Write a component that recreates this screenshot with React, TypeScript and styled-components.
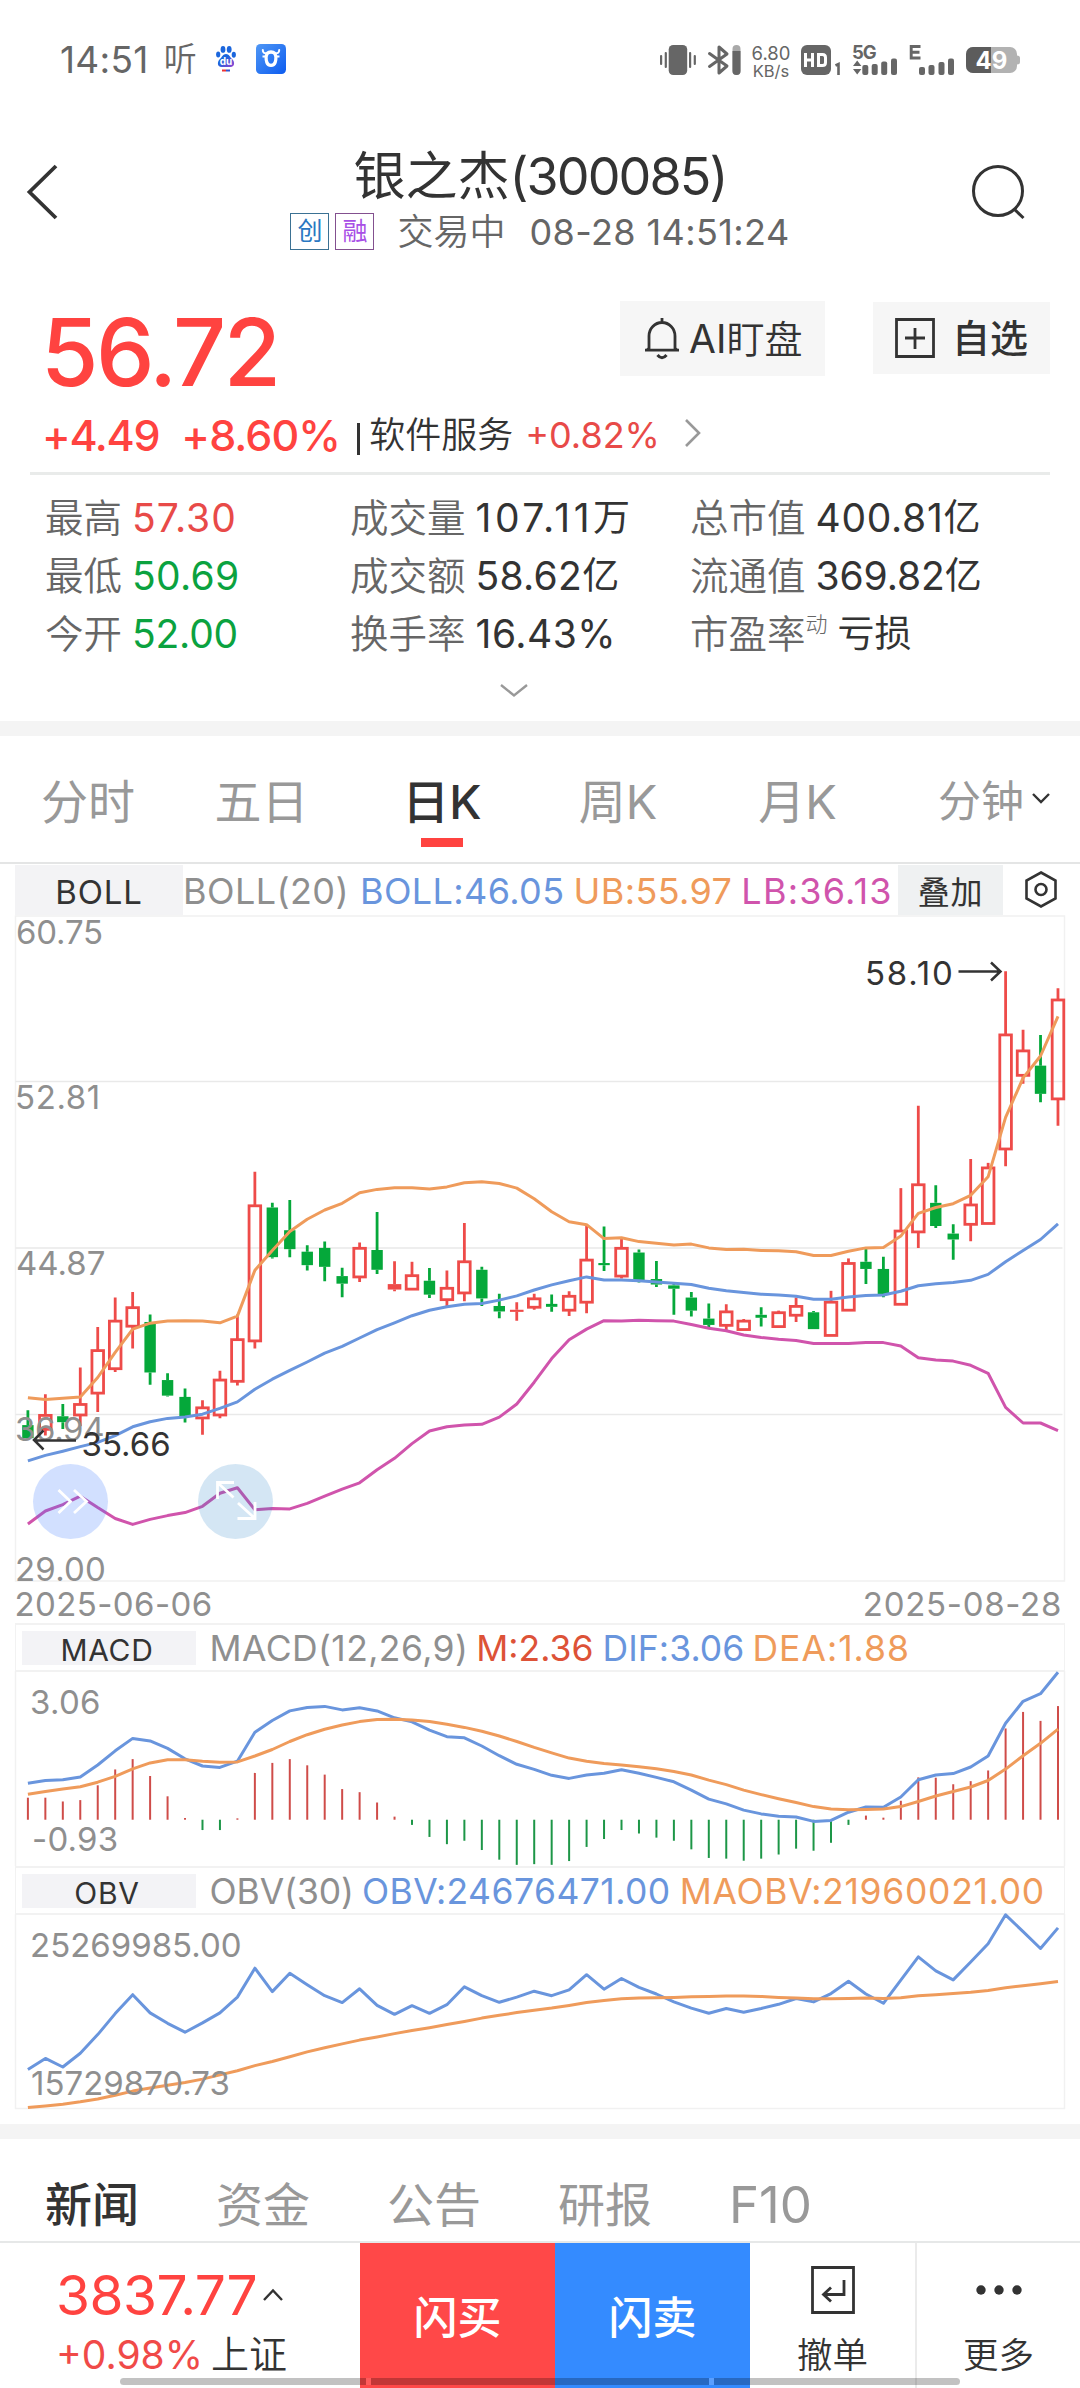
import React from 'react';
import styled, { createGlobalStyle } from 'styled-components';

const RED = '#ff4340';
const GREEN = '#0ba23f';
const INK = '#333333';
const GREY = '#666666';
const MUTED = '#999999';
const BLUE = '#6995dd';
const ORANGE = '#ef9b5b';
const PINK = '#d054ac';
const FONT = 'Inter, "Noto Sans CJK SC", "Noto Sans", sans-serif';

const GlobalStyle = createGlobalStyle`
  * { box-sizing: border-box; }
  body { margin: 0; background: #fff; color: ${INK}; font-family: ${FONT}; }
  svg { display: block; flex: none; overflow: visible; }
`;

const Page = styled.div`
  width: 1080px;
  height: 2388px;
  display: flex;
  flex-direction: column;
  overflow: hidden;
  background: #fff;
`;

interface TextProps {
  $size: number;
  $ls?: number;
  $color?: string;
  $weight?: number;
  $ml?: number;
}

const Text = styled.span<TextProps>`
  font-size: ${p => p.$size}px;
  letter-spacing: ${p => p.$ls ?? 0}px;
  color: ${p => p.$color ?? INK};
  font-weight: ${p => p.$weight ?? 400};
  margin-left: ${p => p.$ml ?? 0}px;
  white-space: pre;
  line-height: 1;
`;

/* ---------- status bar ---------- */

const StatusBar = styled.div`
  height: 118px;
  display: flex;
  align-items: center;
  justify-content: space-between;
  padding: 0 60px;
`;

const StatusGroup = styled.div`
  display: flex;
  align-items: center;
`;

const AppIcons = styled.div`
  display: flex;
  align-items: center;
  gap: 20px;
  margin-left: 19px;
`;

const StatusIcons = styled.div`
  display: grid;
  grid-template-columns: 36px 33px 36px 40px 44px 45px 54px;
  column-gap: 12px;
  align-items: center;
  height: 30px;
`;

const Speed = styled.div`
  display: flex;
  flex-direction: column;
  align-items: center;
  justify-content: space-between;
  height: 32px;
  color: ${GREY};
  line-height: 16px;
`;

const PawIcon = () => (
  <svg width="20" height="28" viewBox="0 0 20 28">
    <defs>
      <linearGradient id="paw" x1="0" y1="0" x2="1" y2="1">
        <stop offset="0.4" stopColor="#1b66dd" />
        <stop offset="1" stopColor="#9b3fd0" />
      </linearGradient>
    </defs>
    <ellipse cx="2.2" cy="9.6" rx="2.1" ry="3" fill="#1b66dd" />
    <ellipse cx="7" cy="4.4" rx="2.4" ry="3.4" fill="#1b66dd" />
    <ellipse cx="13.2" cy="4.4" rx="2.4" ry="3.4" fill="#1b66dd" />
    <ellipse cx="17.8" cy="9.8" rx="2.1" ry="3" fill="#1b66dd" />
    <path d="M10 9c3 0 4 3 6 5 3 2.500 3 8-1.500 8h-9C1 22 1 16.500 4 14c2-2 3-5 6-5z" fill="url(#paw)" />
    <text x="10" y="20" textAnchor="middle" fontSize="10" fontWeight="700" fill="#fff">du</text>
    <path d="M6 25.500h4" stroke="#e33" strokeWidth="2" />
    <path d="M10 25.500h4" stroke="#35c" strokeWidth="2" />
  </svg>
);

const BullIcon = () => (
  <svg width="30" height="30" viewBox="0 0 30 30">
    <defs>
      <linearGradient id="bull" x1="0" y1="0" x2="1" y2="1">
        <stop offset="0" stopColor="#4f97f5" />
        <stop offset="1" stopColor="#0d5cf0" />
      </linearGradient>
    </defs>
    <rect width="30" height="30" rx="4.500" fill="url(#bull)" />
    <path d="M6.800 6c0 2.600 1.500 3.600 4 3.200M23.200 6c0 2.600-1.500 3.600-4 3.200" fill="none" stroke="#fff" strokeWidth="2" strokeLinecap="round" />
    <path d="M11.500 9.200C13 7.500 17 7.500 18.500 9.200c1.600 2 1.600 6.500.6 9.300-1.300 3.800-6.900 3.800-8.200 0-1-2.800-1-7.300.6-9.300z" fill="none" stroke="#fff" strokeWidth="3.400" />
    <path d="M6.500 12.500h3M20.500 12.500h3" stroke="#fff" strokeWidth="2" />
  </svg>
);

const VibrateIcon = () => (
  <svg width="36" height="30" viewBox="0 0 36 30" fill={GREY}>
    <rect x="8.700" width="18.500" height="30" rx="4.500" />
    <rect x="4.700" y="7" width="2.200" height="16" rx="1" />
    <rect y="10" width="2.200" height="10" rx="1" />
    <rect x="29" y="7" width="2.200" height="16" rx="1" />
    <rect x="33.700" y="10" width="2.200" height="10" rx="1" />
  </svg>
);

const BluetoothIcon = () => (
  <svg width="33" height="30" viewBox="0 0 33 30">
    <path d="M1.500 8.500 19 21l-8 7V2l8 7L1.500 21.500" fill="none" stroke={GREY} strokeWidth="3" strokeLinejoin="round" strokeLinecap="round" />
    <rect x="24.500" width="8" height="30" rx="4" fill="#a9a9a9" />
    <path d="M24.500 6h8v20a4 4 0 0 1-8 0z" fill={GREY} />
  </svg>
);

const HdIcon = () => (
  <svg width="40" height="30" viewBox="0 0 40 30">
    <rect width="30" height="30" rx="6" fill={GREY} />
    <path d="M4.500 8v14M4.500 15h7M11.500 8v14M17.500 9.500v11M16 9.500h5.500q3 0 3 3v5q0 3-3 3H16" fill="none" stroke="#fff" strokeWidth="3" />
    <path d="M34.500 20.500 37.500 19v11" fill="none" stroke={GREY} strokeWidth="2.600" />
  </svg>
);

const Signal5G = () => (
  <svg width="44" height="30" viewBox="0 0 44 30" fill={GREY}>
    <text x="-1" y="14" fontSize="18.500" fontWeight="700" letterSpacing="-1">5G</text>
    <path d="M4.200 15.500 8.400 21H0zM4.200 29.500 0 24h8.400z" />
    <rect x="9.300" y="20" width="6" height="10" rx="2" />
    <rect x="18.700" y="19" width="6" height="11" rx="2" />
    <rect x="28.200" y="16.500" width="6" height="13.500" rx="2" />
    <rect x="38" y="13.500" width="6" height="16.500" rx="2" />
  </svg>
);

const SignalE = () => (
  <svg width="45" height="30" viewBox="0 0 45 30" fill={GREY}>
    <path d="M11.500 1.500H2.200v11.500h9.300M2 7.200h8.500" fill="none" stroke={GREY} strokeWidth="2.900" />
    <rect x="10" y="22" width="6" height="8" rx="2" />
    <rect x="19.500" y="20" width="6" height="10" rx="2" />
    <rect x="29.500" y="17" width="6" height="13" rx="2" />
    <rect x="39" y="13.500" width="6" height="16.500" rx="2" />
  </svg>
);

const BatteryIcon = () => (
  <svg width="54" height="26" viewBox="0 0 54 26">
    <rect width="51" height="26" rx="7" fill="#b2b2b2" />
    <path d="M7 0h18v26H7a7 7 0 0 1-7-7V7a7 7 0 0 1 7-7z" fill="#5c5c5c" />
    <path d="M51 8.500q3 0 3 2.500v4q0 2.500-3 2.500z" fill="#b2b2b2" />
    <text x="25.500" y="21.500" textAnchor="middle" fontSize="24" fontWeight="700" fill="#fff">49</text>
  </svg>
);

/* ---------- title bar ---------- */

const TitleBar = styled.header`
  height: 152px;
  display: grid;
  grid-template-columns: 120px 1fr 120px;
  align-items: start;
`;

const TitleSide = styled.div<{ $pad: number }>`
  padding: 47px 0 0 ${p => p.$pad}px;
`;

const TitleCenter = styled.div`
  display: flex;
  flex-direction: column;
  align-items: center;
  padding-top: 28px;
`;

const TitleLine = styled.h1`
  margin: 0;
  height: 61px;
  display: flex;
  align-items: center;
  font-weight: 400;
`;

const SubLine = styled.div`
  height: 49px;
  display: flex;
  align-items: center;
`;

const Badge = styled.span<{ $border: string; $color: string }>`
  width: 39px;
  height: 37px;
  margin-right: 6px;
  border: 1.500px solid ${p => p.$border};
  color: ${p => p.$color};
  font-size: 25px;
  line-height: 34px;
  text-align: center;
`;

/* ---------- quote ---------- */

const Quote = styled.section`
  height: 451px;
  padding: 0 30px;
`;

const PriceRow = styled.div`
  display: flex;
  height: 142px;
`;

const Price = styled.div`
  flex: 1;
  padding: 27px 0 0 11px;
  font-size: 93px;
  line-height: 110px;
  font-weight: 550;
  letter-spacing: -2.500px;
  color: ${RED};
`;

const ActionButton = styled.button<{ $w: number; $h: number; $top: number; $pad: number }>`
  width: ${p => p.$w}px;
  height: ${p => p.$h}px;
  margin: ${p => p.$top}px 0 0;
  padding: 0 0 0 ${p => p.$pad}px;
  display: flex;
  align-items: center;
  border: 0;
  background: #f6f6f6;
  font-family: inherit;
  & + & { margin-left: 48px; }
`;

const ChangeRow = styled.div`
  display: flex;
  align-items: center;
  height: 46px;
  padding-left: 12px;
`;

const Separator = styled.i`
  width: 3px;
  height: 32px;
  margin: 8px 9px 0 17px;
  background: ${INK};
`;

const Divider = styled.hr`
  margin: 14px 0 14px;
  border: 0;
  height: 3px;
  background: #e9ebea;
`;

const Stats = styled.div`
  display: grid;
  grid-template-columns: 305px 340px 1fr;
  grid-auto-rows: 58px;
  padding-left: 15px;
`;

const Stat = styled.div`
  display: flex;
  align-items: center;
  white-space: pre;
`;

const StatLabel = styled.span`
  font-size: 38.500px;
  line-height: 58px;
  font-weight: 350;
  color: ${GREY};
`;

const StatValue = styled.span<{ $color?: string; $ls?: number }>`
  display: flex;
  margin-left: 10px;
  font-size: 39px;
  line-height: 58px;
  letter-spacing: ${p => p.$ls ?? 0.3}px;
  color: ${p => p.$color ?? INK};
`;

const Unit = styled.span`
  font-size: 37px;
  letter-spacing: 0;
`;

const Sup = styled.sup`
  align-self: flex-start;
  margin: 4px 0 0;
  font-size: 22px;
  line-height: 30px;
  font-weight: 300;
  color: ${GREY};
`;

const Expand = styled.div`
  display: flex;
  justify-content: center;
  padding: 21px 52px 0 0;
`;

const Band = styled.div`
  flex: none;
  height: 15px;
  background: #f4f4f4;
`;

/* ---------- period tabs ---------- */

const PeriodTabs = styled.nav`
  height: 128px;
  flex: none;
  display: grid;
  grid-template-columns: 176px 171px 190px 162px 197px 184px;
  border-bottom: 2px solid #e4e5e5;
`;

const PeriodTab = styled.div<{ $active?: boolean; $size?: number }>`
  display: flex;
  align-items: center;
  justify-content: center;
  position: relative;
  height: 124px;
  font-size: ${p => p.$size ?? 47}px;
  font-weight: ${p => (p.$active ? 500 : 370)};
  color: ${p => (p.$active ? INK : MUTED)};
  &::after {
    content: '';
    display: ${p => (p.$active ? 'block' : 'none')};
    position: absolute;
    left: 74px;
    top: 102px;
    width: 42px;
    height: 9px;
    background: ${RED};
  }
  svg { margin: 0 -12px 0 8px; }
`;

/* ---------- chart ---------- */

const IndicatorRow = styled.div`
  flex: none;
  height: 51px;
  display: flex;
  align-items: center;
  padding: 0 15px;
`;

const IndicatorButton = styled.div<{ $w: number; $bg: string; $size: number; $drop: number }>`
  flex: none;
  width: ${p => p.$w}px;
  height: 50px;
  display: flex;
  align-items: center;
  justify-content: center;
  font-size: ${p => p.$size}px;
  letter-spacing: 0.800px;
  padding-top: ${p => p.$drop}px;
  background: ${p => p.$bg};
`;

const Readings = styled.div`
  flex: none;
  width: 715px;
  display: flex;
  align-items: center;
  padding-top: 2px;
`;

const ChartArea = styled.div`
  position: relative;
  flex: none;
  height: 667px;
`;

const RoundButton = styled.button<{ $x: number; $bg: string }>`
  position: absolute;
  left: ${p => p.$x}px;
  top: 549px;
  width: 75px;
  height: 75px;
  padding: 0;
  border: 0;
  border-radius: 50%;
  background: ${p => p.$bg};
`;

const DateRow = styled.div`
  flex: none;
  height: 41px;
  display: flex;
  align-items: center;
  justify-content: space-between;
  padding: 4px 18px 0 14.500px;
`;

const Panel = styled.div`
  flex: none;
  margin: 0 15px;
`;

const PanelHead = styled.div`
  height: 49px;
  margin-bottom: -1px;
  display: flex;
  align-items: center;
  padding: 3px 0 0 7px;
  border: 2px solid #f2f2f2;
  border-width: 2px 1px;
`;

const PanelTag = styled.div`
  flex: none;
  width: 174px;
  height: 34px;
  margin: -3px 0 0 -1px;
  padding: 4px 4px 0 0;
  background: #f3f3f6;
  display: flex;
  justify-content: center;
  align-items: center;
  font-size: 30px;
  letter-spacing: 0.700px;
`;

const ChartLabel = styled.text`
  font-family: ${FONT};
  font-size: 33px;
`;

const X0 = 27.9;
const STEP = 17.459;
const xAt = (i: number) => X0 + i * STEP;

/* colour, high, body top, body bottom, low */
type Candle = ['r' | 'g' | 'f', number, number, number, number];
const candles: Candle[] = [
  ['g', 1070, 1105, 1136, 1140], ['r', 1032, 1082, 1115, 1130], ['g', 1055, 1084, 1098, 1114], ['r', 968, 1056, 1081, 1108],
  ['r', 872, 928, 1029, 1074], ['r', 802, 858, 971, 979], ['r', 789, 826, 870, 923], ['g', 842, 860, 980, 1009],
  ['g', 982, 998, 1035, 1037], ['g', 1018, 1038, 1084, 1099], ['r', 1046, 1064, 1088, 1128], ['r', 976, 998, 1081, 1089],
  ['r', 842, 902, 1001, 1011], ['r', 503, 584, 905, 923], ['g', 577, 588, 706, 709], ['g', 570, 642, 687, 706],
  ['g', 678, 693, 725, 738], ['g', 669, 684, 729, 763], ['g', 731, 751, 769, 801], ['r', 671, 685, 753, 765],
  ['g', 599, 689, 736, 746], ['f', 716, 770, 783, 787], ['r', 717, 750, 782, 782], ['g', 732, 762, 795, 803],
  ['r', 738, 780, 807, 822], ['r', 625, 717, 791, 811], ['g', 729, 736, 804, 822], ['g', 793, 822, 835, 851],
  ['f', 813, 831, 836, 857], ['r', 793, 805, 825, 831], ['g', 795, 817, 824, 836], ['r', 787, 799, 832, 846],
  ['r', 630, 713, 813, 839], ['g', 633, 720, 725, 739], ['r', 662, 685, 751, 757], ['g', 688, 695, 764, 766],
  ['g', 715, 758, 771, 777], ['g', 770, 773, 781, 843], ['g', 789, 802, 833, 847], ['g', 816, 852, 867, 873],
  ['r', 818, 836, 868, 880], ['r', 853, 858, 878, 878], ['g', 825, 843, 850, 871], ['r', 833, 838, 871, 871],
  ['r', 802, 823, 844, 860], ['g', 834, 837, 877, 877], ['r', 786, 813, 892, 892], ['r', 709, 721, 832, 832],
  ['g', 685, 717, 734, 770], ['g', 705, 734, 796, 801], ['r', 542, 644, 818, 818], ['r', 346, 534, 646, 684],
  ['g', 535, 577, 632, 637], ['g', 628, 650, 664, 712], ['r', 473, 582, 628, 668], ['r', 482, 494, 626, 626],
  ['r', 27, 178, 449, 490], ['r', 166, 216, 274, 294], ['g', 178, 251, 318, 338], ['r', 67, 95, 330, 394],
];
const upper = [1040, 1044, 1041, 1038, 992, 932, 877, 863, 858, 857, 858, 862, 846, 737, 690, 645, 616, 594, 578, 553, 545, 541, 541, 544, 539, 529, 527, 531, 542, 567, 598, 622, 629, 662, 660, 669, 673, 677, 675, 684, 688, 687, 690, 691, 693, 702, 702, 692, 684, 683, 656, 602, 588, 579, 559, 515, 374, 280, 228, 134];
const middle = [1190, 1177, 1167, 1156, 1146, 1130, 1109, 1097, 1089, 1086, 1079, 1065, 1050, 1020, 996, 975, 955, 934, 918, 898, 878, 862, 845, 832, 824, 818, 816, 808, 798, 784, 772, 762, 753, 760, 760, 762, 765, 768, 771, 780, 786, 790, 794, 796, 799, 806, 806, 801, 797, 796, 787, 774, 769, 766, 761, 747, 717, 690, 664, 627];
const lower = [1340, 1309, 1294, 1274, 1301, 1327, 1341, 1329, 1320, 1313, 1298, 1267, 1254, 1306, 1303, 1304, 1291, 1274, 1257, 1242, 1211, 1184, 1149, 1119, 1109, 1105, 1103, 1086, 1055, 1003, 947, 902, 877, 857, 858, 856, 857, 858, 866, 875, 881, 891, 897, 901, 904, 911, 911, 911, 909, 909, 917, 945, 950, 953, 963, 982, 1063, 1100, 1100, 1118];
const dif = [532, 524, 522, 514, 479, 438, 402, 409, 431, 461, 482, 486, 468, 384, 350, 322, 312, 309, 319, 313, 322, 342, 354, 378, 397, 400, 424, 452, 477, 492, 509, 518, 508, 503, 493, 503, 515, 528, 552, 578, 592, 610, 621, 628, 630, 643, 640, 616, 601, 602, 572, 522, 508, 504, 485, 453, 358, 294, 272, 210];
const dea = [564, 556, 549, 542, 529, 512, 490, 473, 464, 464, 468, 471, 470, 453, 434, 411, 391, 375, 363, 353, 347, 346, 348, 353, 361, 370, 381, 395, 411, 428, 444, 459, 468, 475, 479, 484, 490, 498, 508, 523, 536, 552, 565, 577, 588, 600, 607, 609, 608, 607, 600, 585, 569, 556, 543, 524, 491, 452, 416, 375];
const macd = [574, 574, 585, 581, 538, 492, 462, 511, 570, 633, 668, 668, 634, 502, 473, 462, 480, 507, 549, 558, 588, 629, 653, 688, 709, 699, 726, 754, 769, 767, 769, 758, 717, 694, 668, 678, 690, 699, 724, 749, 751, 757, 751, 739, 722, 728, 705, 653, 626, 632, 583, 515, 516, 535, 526, 495, 373, 325, 351, 308];
const obv = [1363, 1331, 1356, 1316, 1262, 1201, 1146, 1199, 1229, 1255, 1228, 1199, 1153, 1069, 1137, 1084, 1117, 1149, 1169, 1129, 1177, 1203, 1178, 1200, 1175, 1123, 1149, 1168, 1153, 1136, 1149, 1132, 1088, 1130, 1099, 1125, 1144, 1167, 1185, 1200, 1186, 1197, 1186, 1174, 1157, 1167, 1143, 1107, 1144, 1171, 1104, 1036, 1077, 1103, 1051, 998, 914, 963, 1012, 952];
const maobv = [1474, 1469, 1464, 1457, 1449, 1438, 1426, 1417, 1409, 1401, 1391, 1379, 1367, 1352, 1340, 1326, 1312, 1300, 1289, 1278, 1269, 1259, 1250, 1242, 1233, 1224, 1214, 1206, 1198, 1191, 1185, 1177, 1169, 1163, 1158, 1156, 1155, 1154, 1152, 1151, 1150, 1150, 1151, 1154, 1156, 1158, 1158, 1157, 1156, 1157, 1155, 1149, 1146, 1143, 1139, 1134, 1126, 1120, 1114, 1108];

const Line = ({ data, y, color }: { data: number[]; y: (v: number) => number; color: string }) => (
  <polyline
    points={data.map((v, i) => `${xAt(i).toFixed(1)},${y(v).toFixed(1)}`).join(' ')}
    fill="none"
    stroke={color}
    strokeWidth="3"
    strokeLinejoin="round"
  />
);

const priceY = (v: number) => 45 + v * 0.4209;

const PriceChart = () => (
  <svg width="1080" height="667" viewBox="0 0 1080 667">
    <path d="M15.500 1h1049v665H15.500z" fill="none" stroke="#f1f1f1" strokeWidth="1.500" />
    <path d="M15.500 166.500h1047M15.500 333h1047M15.500 499.500h1047" stroke="#e9e9e9" strokeWidth="1.500" />
    {candles.map(([kind, high, top, bottom, low], i) => {
      const x = xAt(i);
      const [h, t, b, l] = [high, top, bottom, low].map(priceY);
      const color = kind === 'g' ? '#05a83a' : '#ee4b49';
      return (
        <g key={i} fill={color} stroke={color}>
          <path d={`M${x} ${h}V${t}M${x} ${b}V${l}`} strokeWidth="2.800" />
          {kind === 'r'
            ? <rect x={x - 5.8} y={t} width="11.600" height={b - t} strokeWidth="2.800" fill="none" />
            : <rect x={x - (kind === 'f' ? 6.8 : 5.7)} y={t} width={kind === 'f' ? 13.6 : 11.4} height={b - t} stroke="none" />}
        </g>
      );
    })}
    <Line data={upper} y={priceY} color={ORANGE} />
    <Line data={middle} y={priceY} color={BLUE} />
    <Line data={lower} y={priceY} color={PINK} />
    <g fill="#8f8f8f">
      <ChartLabel x="16" y="28.500" letterSpacing="-0.200">60.75</ChartLabel>
      <ChartLabel x="15" y="194" letterSpacing="0.600">52.81</ChartLabel>
      <ChartLabel x="16" y="360">44.87</ChartLabel>
      <ChartLabel x="15" y="526" letterSpacing="-0.300">36.94</ChartLabel>
      <ChartLabel x="15" y="666" letterSpacing="0.200">29.00</ChartLabel>
    </g>
    <g fill={INK}>
      <ChartLabel x="81.500" y="541">35.66</ChartLabel>
      <ChartLabel x="865" y="70" letterSpacing="1.800">58.10</ChartLabel>
    </g>
    <g fill="none" stroke={INK} strokeWidth="2.500">
      <path d="M76 525.500H34M43.500 515.500 34 525l9.500 9.500" />
      <path d="M958.500 56.500h42M991 47.500l9.500 9-9.500 9" />
    </g>
  </svg>
);

const macdY = (v: number) => v * 0.3444 - 71;
const obvY = (v: number) => v * 0.3444 - 314;

const MacdChart = () => (
  <svg width="1050" height="195" viewBox="15 0 1050 195">
    <path d="M15.500 0v195M1064.500 0v195" stroke="#f1f1f1" strokeWidth="1.500" />
    {macd.map((v, i) => (
      <path key={i} d={`M${xAt(i)} ${macdY(638)}V${macdY(v)}`} stroke={v < 638 ? '#cf4c49' : '#1d9647'} strokeWidth="2" />
    ))}
    <Line data={dif} y={macdY} color={BLUE} />
    <Line data={dea} y={macdY} color={ORANGE} />
    <g fill="#8f8f8f">
      <ChartLabel x="30" y="43" letterSpacing="0.300">3.06</ChartLabel>
      <ChartLabel x="32" y="180" letterSpacing="0.200">-0.93</ChartLabel>
    </g>
  </svg>
);

const ObvChart = () => (
  <svg width="1050" height="195" viewBox="15 0 1050 195">
    <path d="M15.500 0v194.500h1049V0" fill="none" stroke="#f1f1f1" strokeWidth="1.500" />
    <Line data={obv} y={obvY} color={BLUE} />
    <Line data={maobv} y={obvY} color={ORANGE} />
    <g fill="#8f8f8f">
      <ChartLabel x="30" y="43">25269985.00</ChartLabel>
      <ChartLabel x="31" y="181">15729870.73</ChartLabel>
    </g>
  </svg>
);

/* ---------- news tabs & bottom bar ---------- */

const NewsTabs = styled.nav`
  flex: none;
  height: 104px;
  display: grid;
  grid-template-columns: 171px 171px 171px 171px 1fr;
  padding: 25px 0 0 45px;
  border-bottom: 2px solid #e6e8e8;
`;

const NewsTab = styled.span<{ $active?: boolean; $size?: number }>`
  font-size: ${p => p.$size ?? 47}px;
  line-height: 82px;
  font-weight: ${p => (p.$active ? 500 : 370)};
  color: ${p => (p.$active ? INK : MUTED)};
`;

const ChartGap = styled.div`
  flex: none;
  height: 15px;
`;

const BottomBar = styled.footer`
  position: relative;
  flex: 1;
  display: grid;
  grid-template-columns: 360px 195px 195px 165px 165px;
`;

const IndexCell = styled.div`
  padding: 20px 0 0 56px;
`;

const IndexLine = styled.div<{ $h: number }>`
  height: ${p => p.$h}px;
  display: flex;
  align-items: center;
`;

const TradeButton = styled.button<{ $bg: string }>`
  border: 0;
  padding: 0 0 1px;
  background: ${p => p.$bg};
  color: #fff;
  font-family: inherit;
  font-size: 44px;
  font-weight: 500;
`;

const ToolCell = styled.div`
  display: grid;
  grid-template-rows: 48px 1fr;
  justify-items: center;
  align-items: center;
  padding: 23px 0 0;
  font-size: 35.500px;
  & + & { border-left: 2px solid #ebebeb; }
`;

const ToolLabel = styled.span`
  align-self: start;
  margin-top: 17px;
  line-height: 50px;
  font-weight: 350;
`;

const HomeIndicator = styled.div`
  position: absolute;
  left: 120px;
  bottom: 3px;
  width: 840px;
  height: 7px;
  border-radius: 4px;
  background: rgba(0, 0, 0, 0.24);
  display: flex;
  gap: 338px;
  padding-left: 246px;
`;

const Notch = styled.i<{ $c: string }>`
  width: 5px;
  height: 7px;
  background: ${p => p.$c};
`;

export default function App() {
  return (
    <Page>
      <GlobalStyle />
      <StatusBar>
        <StatusGroup>
          <Text $size={37} $ls={0.3} $color={GREY}>14:51</Text>
          <Text $size={33} $color={GREY} $ml={15} $weight={350}>听</Text>
          <AppIcons>
            <PawIcon />
            <BullIcon />
          </AppIcons>
        </StatusGroup>
        <StatusIcons>
          <VibrateIcon />
          <BluetoothIcon />
          <Speed>
            <Text $size={18.5} $color={GREY}>6.80</Text>
            <Text $size={16.5} $color={GREY}>KB/s</Text>
          </Speed>
          <HdIcon />
          <Signal5G />
          <SignalE />
          <BatteryIcon />
        </StatusIcons>
      </StatusBar>

      <TitleBar>
        <TitleSide $pad={27}>
          <svg width="31" height="54" viewBox="0 0 31 54">
            <path d="M29 1 2.500 27 29 53" fill="none" stroke={INK} strokeWidth="3.800" />
          </svg>
        </TitleSide>
        <TitleCenter>
          <TitleLine>
            <Text $size={52} $weight={370}>银之杰</Text>
            <Text $size={52} $ls={-1.9} $weight={370}>(300085)</Text>
          </TitleLine>
          <SubLine>
            <Badge $border="#3b7193" $color="#2a78c2">创</Badge>
            <Badge $border="#83508f" $color="#a84fe6">融</Badge>
            <Text $size={36} $color={GREY} $ml={17} $weight={350}>交易中</Text>
            <Text $size={36} $color={GREY} $ml={24} $ls={0.4}>08-28 14:51:24</Text>
          </SubLine>
        </TitleCenter>
        <TitleSide $pad={11}>
          <svg width="54" height="56" viewBox="0 0 54 56">
            <circle cx="27" cy="26" r="24.500" fill="none" stroke={INK} strokeWidth="3" />
            <path d="m43 44 9.500 9" stroke={INK} strokeWidth="3" />
          </svg>
        </TitleSide>
      </TitleBar>

      <Quote>
        <PriceRow>
          <Price>56.72</Price>
          <ActionButton $w={205} $h={75} $top={31} $pad={25}>
            <svg width="34" height="42" viewBox="0 0 34 42">
              <path d="M4 31V18a13 13.500 0 0 1 26 0v13M0 32.200h34M17 0v4" fill="none" stroke={INK} strokeWidth="2.800" />
              <path d="M4 30 1.500 32M30 30l2.500 2" stroke={INK} strokeWidth="2" />
              <path d="M12.500 37q4.500 5.500 9 0" fill="none" stroke={INK} strokeWidth="3" />
            </svg>
            <Text $size={39} $ml={10}>AI</Text>
            <Text $size={38} $ml={0} $weight={350}>盯盘</Text>
          </ActionButton>
          <ActionButton $w={177} $h={72} $top={32} $pad={22}>
            <svg width="40" height="40" viewBox="0 0 40 40">
              <path d="M1.500 1.500h37v37h-37zM10 20h20M20 10v21" fill="none" stroke={INK} strokeWidth="2.800" />
            </svg>
            <Text $size={38} $ml={17} $weight={500}>自选</Text>
          </ActionButton>
        </PriceRow>
        <ChangeRow>
          <Text $size={43} $ls={-1.3} $color={RED} $weight={500}>+4.49</Text>
          <Text $size={43} $ls={-0.9} $color={RED} $weight={500} $ml={22}>+8.60%</Text>
          <Separator />
          <Text $size={36} $weight={350}>软件服务</Text>
          <Text $size={36} $color="#e84a48" $ml={12}>+0.82%</Text>
          <svg width="60" height="28" viewBox="-25 2 60 28">
            <path d="m1 1 13 13L1 27" fill="none" stroke={MUTED} strokeWidth="2.600" />
          </svg>
        </ChangeRow>
        <Divider />
        <Stats>
          <Stat><StatLabel>最高</StatLabel><StatValue $color="#e84a48" $ls={1}>57.30</StatValue></Stat>
          <Stat><StatLabel>成交量</StatLabel><StatValue $ls={3.5}>107.11<Unit>万</Unit></StatValue></Stat>
          <Stat><StatLabel>总市值</StatLabel><StatValue $ls={0.7}>400.81<Unit>亿</Unit></StatValue></Stat>
          <Stat><StatLabel>最低</StatLabel><StatValue $color={GREEN}>50.69</StatValue></Stat>
          <Stat><StatLabel>成交额</StatLabel><StatValue $ls={0.3}>58.62<Unit>亿</Unit></StatValue></Stat>
          <Stat><StatLabel>流通值</StatLabel><StatValue $ls={-0.1}>369.82<Unit>亿</Unit></StatValue></Stat>
          <Stat><StatLabel>今开</StatLabel><StatValue $color={GREEN} $ls={-0.2}>52.00</StatValue></Stat>
          <Stat><StatLabel>换手率</StatLabel><StatValue $ls={0.5}>16.43%</StatValue></Stat>
          <Stat><StatLabel>市盈率</StatLabel><Sup>动</Sup><StatValue><Unit>亏损</Unit></StatValue></Stat>
        </Stats>
        <Expand>
          <svg width="28" height="13" viewBox="0 0 28 13">
            <path d="m1 1 13 10.500L27 1" fill="none" stroke={MUTED} strokeWidth="2.400" />
          </svg>
        </Expand>
      </Quote>

      <Band />

      <PeriodTabs>
        <PeriodTab>分时</PeriodTab>
        <PeriodTab>五日</PeriodTab>
        <PeriodTab $active>日K</PeriodTab>
        <PeriodTab>周K</PeriodTab>
        <PeriodTab>月K</PeriodTab>
        <PeriodTab $size={43}>
          分钟
          <svg width="18" height="11" viewBox="0 0 18 11">
            <path d="m1 1 8 8 8-8" fill="none" stroke={INK} strokeWidth="2.400" />
          </svg>
        </PeriodTab>
      </PeriodTabs>

      <IndicatorRow>
        <IndicatorButton $w={168} $bg="#f3f3f5" $size={33} $drop={4}>BOLL</IndicatorButton>
        <Readings>
          <Text $size={36} $ls={0.4} $color="#8f8f8f">BOLL(20)</Text>
          <Text $size={36} $ls={0.4} $color={BLUE} $ml={11}>BOLL:46.05</Text>
          <Text $size={36} $ls={0.4} $color={ORANGE} $ml={9}>UB:55.97</Text>
          <Text $size={36} $ls={1.2} $color={PINK} $ml={9}>LB:36.13</Text>
        </Readings>
        <IndicatorButton $w={105} $bg="#eff1f2" $size={32} $drop={0}>叠加</IndicatorButton>
        <svg width="54" height="37" viewBox="-21 0 54 37">
          <path d="M17 1.500 31.500 9.500v18L17 35.500 2.500 27.500v-18z" fill="none" stroke={INK} strokeWidth="2.600" />
          <circle cx="17" cy="18.500" r="5.500" fill="none" stroke={INK} strokeWidth="2.600" />
        </svg>
      </IndicatorRow>

      <ChartArea>
        <PriceChart />
        <RoundButton $x={33} $bg="rgba(60,120,255,0.23)">
          <svg width="75" height="75" viewBox="0 0 75 75">
            <path d="m25.500 26 12 11.500L25.500 49M41 26l12.500 11.500L41 49" fill="none" stroke="#fff" strokeWidth="2.800" />
          </svg>
        </RoundButton>
        <RoundButton $x={198} $bg="rgba(40,130,200,0.2)">
          <svg width="75" height="75" viewBox="0 0 75 75">
            <path d="M19.500 35V18.500H36M19.500 18.500l16 15M57 38v16.500H39.500M57 54.500 40 39" fill="none" stroke="#fff" strokeWidth="2.800" />
          </svg>
        </RoundButton>
      </ChartArea>
      <DateRow>
        <Text $size={33} $ls={0.4} $color="#8f8f8f">2025-06-06</Text>
        <Text $size={33} $ls={0.7} $color="#8f8f8f">2025-08-28</Text>
      </DateRow>

      <Panel>
        <PanelHead>
          <PanelTag>MACD</PanelTag>
          <Text $size={35.5} $ls={0.4} $color="#8f8f8f" $ml={13.5}>MACD(12,26,9)</Text>
          <Text $size={35.5} $color="#dd5237" $ml={8}>M:2.36</Text>
          <Text $size={35.5} $ls={0.1} $color={BLUE} $ml={9}>DIF:3.06</Text>
          <Text $size={35.5} $ls={1} $color={ORANGE} $ml={8}>DEA:1.88</Text>
        </PanelHead>
        <MacdChart />
        <PanelHead>
          <PanelTag>OBV</PanelTag>
          <Text $size={35.5} $ls={-0.1} $color="#8f8f8f" $ml={13.5}>OBV(30)</Text>
          <Text $size={35.5} $ls={0.45} $color={BLUE} $ml={8}>OBV:24676471.00</Text>
          <Text $size={35.5} $ls={0.7} $color={ORANGE} $ml={9}>MAOBV:21960021.00</Text>
        </PanelHead>
        <ObvChart />
      </Panel>
      <ChartGap />

      <Band />

      <NewsTabs>
        <NewsTab $active>新闻</NewsTab>
        <NewsTab>资金</NewsTab>
        <NewsTab>公告</NewsTab>
        <NewsTab>研报</NewsTab>
        <NewsTab $size={51}>F10</NewsTab>
      </NewsTabs>

      <BottomBar>
        <IndexCell>
          <IndexLine $h={64}>
            <Text $size={55} $ls={-0.5} $color={RED}>3837.77</Text>
            <svg width="26" height="12" viewBox="-6 0 26 12">
              <path d="m1 11 9-9.500L19 11" fill="none" stroke={INK} strokeWidth="2.400" />
            </svg>
          </IndexLine>
          <IndexLine $h={54}>
            <Text $size={39} $color="#f04a48">+0.98%</Text>
            <Text $size={38} $ml={8} $weight={350}>上证</Text>
          </IndexLine>
        </IndexCell>
        <TradeButton $bg="#ff4848">闪买</TradeButton>
        <TradeButton $bg="#348bff">闪卖</TradeButton>
        <ToolCell>
          <svg width="44" height="48" viewBox="0 0 44 48">
            <path d="M1.500 1.500h41v45h-41z" fill="none" stroke={INK} strokeWidth="2.800" />
            <path d="M33 14v14.500H13M20 21.500l-7.500 7 7.500 7" fill="none" stroke={INK} strokeWidth="2.800" />
          </svg>
          <ToolLabel>撤单</ToolLabel>
        </ToolCell>
        <ToolCell>
          <svg width="46" height="12" viewBox="0 0 46 12" fill={INK}>
            <circle cx="5" cy="6" r="4.700" />
            <circle cx="23" cy="6" r="4.700" />
            <circle cx="41" cy="6" r="4.700" />
          </svg>
          <ToolLabel>更多</ToolLabel>
        </ToolCell>
        <HomeIndicator>
          <Notch $c="#ff5a5a" />
          <Notch $c="#5a9fff" />
        </HomeIndicator>
      </BottomBar>
    </Page>
  );
}
